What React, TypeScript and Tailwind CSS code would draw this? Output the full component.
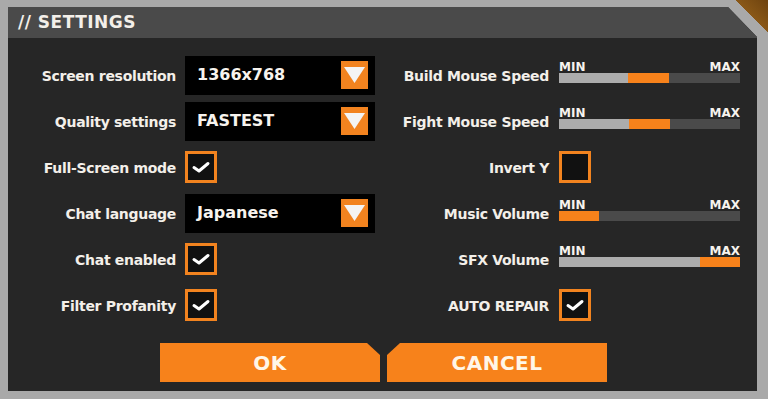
import { ReactNode } from 'react';

// Types
type SliderProps = {
  start: number; // px where the orange part starts
  end: number; // px where the orange part ends
};

const font = { fontFamily: '"DejaVu Sans", "Liberation Sans", sans-serif' };

const Check = ({ checked }: { checked: boolean }) => (
  <div className="flex h-[32px] w-[32px] items-center justify-center border-[3px] border-[#f2831f] bg-[#111111]">
    {checked && (
      <svg width="20" height="16" viewBox="0 0 20 16" fill="none">
        <path d="M3 8.5 8 12 17 4.5" stroke="#ffffff" strokeWidth="3" strokeLinecap="round" strokeLinejoin="round" />
      </svg>
    )}
  </div>
);

const Dropdown = ({ value }: { value: string }) => (
  <div className="flex h-[39px] w-[190px] items-center justify-between bg-black pl-[12px] pr-[7px]">
    <span className="text-[16px] font-bold text-[#f7f3ee]">{value}</span>
    <div className="flex h-[28px] w-[27px] items-start justify-center bg-[#f2831f] pt-[6px]">
      <svg width="21" height="16" viewBox="0 0 21 16">
        <polygon points="0,0 21,0 10.5,16" fill="#f4f4f4" />
      </svg>
    </div>
  </div>
);

const Slider = ({ start, end }: SliderProps) => (
  <div className="mb-2 flex w-[181px] flex-col">
    <div className="flex h-[14px] items-end justify-between text-[12px] leading-none font-bold text-[#f7f3ee]">
      <span>MIN</span>
      <span>MAX</span>
    </div>
    <div className="relative h-[10px] w-full bg-[#4a4a4a]">
      <div className="absolute top-0 left-0 h-full bg-[#acacac]" style={{ width: start }} />
      <div className="absolute top-0 h-full bg-[#f7821b]" style={{ left: start, width: end - start }} />
    </div>
  </div>
);

const Row = ({
  left,
  leftCtl,
  right,
  rightCtl,
}: {
  left: string;
  leftCtl: ReactNode;
  right: string;
  rightCtl: ReactNode;
}) => (
  <div className="flex h-[46px] items-center">
    <div className="w-[168px] pt-[2px] text-right text-[14px] font-bold tracking-[-0.3px] text-[#f3efe9]">{left}</div>
    <div className="ml-[9px] flex w-[190px] items-center">{leftCtl}</div>
    <div className="w-[174px] pt-[2px] text-right text-[14px] font-bold tracking-[-0.3px] text-[#f3efe9]">{right}</div>
    <div className="ml-[10px] flex w-[181px] items-center">{rightCtl}</div>
  </div>
);

export default function App() {
  return (
    <div
      className="h-[399px] w-[768px] overflow-hidden bg-[linear-gradient(225deg,#6e430f_0px,#8a5817_23px,#a9a9a9_23px)] pt-[7px] pl-[8px]"
      style={font}
    >
      <div className="flex h-[384px] w-[749px] flex-col bg-[#262626] [clip-path:polygon(0_0,calc(100%-29px)_0,100%_30px,100%_100%,0_100%)]">
        {/* Header */}
        <div className="flex h-[31px] items-center bg-[#4a4a4a] pl-[10px]">
          <span className="text-[17px] font-bold tracking-[0.5px] text-[#f3efe9]">// SETTINGS</span>
        </div>

        {/* Body */}
        <div className="flex flex-col pt-[14px]">
          <Row left="Screen resolution" leftCtl={<Dropdown value="1366x768" />} right="Build Mouse Speed" rightCtl={<Slider start={69} end={110} />} />
          <Row left="Quality settings" leftCtl={<Dropdown value="FASTEST" />} right="Fight Mouse Speed" rightCtl={<Slider start={70} end={111} />} />
          <Row left="Full-Screen mode" leftCtl={<Check checked />} right="Invert Y" rightCtl={<Check checked={false} />} />
          <Row left="Chat language" leftCtl={<Dropdown value="Japanese" />} right="Music Volume" rightCtl={<Slider start={0} end={40} />} />
          <Row left="Chat enabled" leftCtl={<Check checked />} right="SFX Volume" rightCtl={<Slider start={141} end={181} />} />
          <Row left="Filter Profanity" leftCtl={<Check checked />} right="AUTO REPAIR" rightCtl={<Check checked />} />

          {/* Buttons */}
          <div className="mt-[15px] flex gap-[7px] pl-[152px]">
            <button
              type="button"
              className="flex h-[39px] w-[220px] items-center justify-center bg-[#f7821b] text-[20px] font-bold tracking-[0.5px] text-[#fff6e8] [clip-path:polygon(0_0,calc(100%-13px)_0,100%_12px,100%_100%,0_100%)]"
            >
              OK
            </button>
            <button
              type="button"
              className="flex h-[39px] w-[220px] items-center justify-center bg-[#f7821b] text-[20px] font-bold tracking-[0.5px] text-[#fff6e8] [clip-path:polygon(13px_0,100%_0,100%_100%,0_100%,0_12px)]"
            >
              CANCEL
            </button>
          </div>
        </div>
      </div>
    </div>
  );
}
